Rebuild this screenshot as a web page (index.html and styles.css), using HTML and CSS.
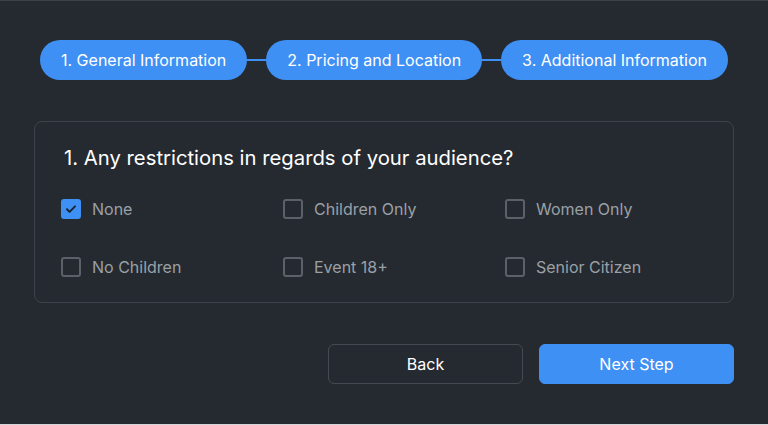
FILE: index.html
```html
<!DOCTYPE html>
<html lang="en">
<head>
<meta charset="utf-8">
<title>Additional Information</title>
<link rel="stylesheet" href="styles.css">
</head>
<body>
<div class="frame">
  <nav class="steps">
    <div class="step">1. General Information</div>
    <div class="connector"></div>
    <div class="step">2. Pricing and Location</div>
    <div class="connector"></div>
    <div class="step">3. Additional Information</div>
  </nav>

  <section class="card">
    <h2 class="card-title">1. Any restrictions in regards of your audience?</h2>
    <div class="options">
      <label class="option"><span class="box checked"><svg viewBox="0 0 20 20" width="20" height="20"><path d="M6 10.3l2.6 2.6L14 7.4" fill="none" stroke="#1b2430" stroke-width="2" stroke-linecap="round" stroke-linejoin="round"/></svg></span><span class="label">None</span></label>
      <label class="option"><span class="box"></span><span class="label">Children Only</span></label>
      <label class="option"><span class="box"></span><span class="label">Women Only</span></label>
      <label class="option"><span class="box"></span><span class="label">No Children</span></label>
      <label class="option"><span class="box"></span><span class="label">Event 18+</span></label>
      <label class="option"><span class="box"></span><span class="label">Senior Citizen</span></label>
    </div>
  </section>

  <div class="actions">
    <button class="btn btn-back">Back</button>
    <button class="btn btn-next">Next Step</button>
  </div>
</div>
</body>
</html>
```

FILE: styles.css
```css
html, body {
  margin: 0;
  padding: 0;
}
body {
  background: #d3d6d9;
  font-family: Inter, "Noto Sans", "Liberation Sans", sans-serif;
  width: 768px;
  height: 425px;
  overflow: hidden;
}
.frame {
  box-sizing: border-box;
  height: 424px;
  background: #252a30;
  border-top: 1px solid #3d4248;
  padding: 39px 34px 0 34px;
}
.steps {
  display: flex;
  align-items: center;
  padding: 0 6px;
}
.step {
  height: 40px;
  line-height: 40px;
  padding: 0 21px;
  border-radius: 20px;
  background: #3f90f4;
  color: #ffffff;
  font-size: 16px;
  white-space: nowrap;
}
.connector {
  flex: 1;
  height: 2px;
  background: #3f90f4;
}
.card {
  margin-top: 41px;
  border: 1px solid #3d434a;
  border-radius: 8px;
  padding: 24px 26px 25px 26px;
}
.card-title {
  margin: 0;
  font-size: 20.3px;
  line-height: 24px;
  font-weight: 400;
  color: #ffffff;
  padding-left: 3px;
}
.options {
  margin-top: 29px;
  display: grid;
  grid-template-columns: repeat(3, 1fr);
  column-gap: 20px;
  row-gap: 38px;
}
.option {
  display: flex;
  align-items: center;
  gap: 11px;
  height: 20px;
}
.box {
  box-sizing: border-box;
  width: 20px;
  height: 20px;
  border: 2px solid #5b6168;
  border-radius: 3px;
  display: flex;
  align-items: center;
  justify-content: center;
}
.box.checked {
  background: #3f90f4;
  border-color: #3f90f4;
}
.box svg {
  display: block;
  flex: none;
}
.label {
  font-size: 16px;
  line-height: 20px;
  color: #9aa0a6;
}
.actions {
  margin-top: 41px;
  display: flex;
  justify-content: flex-end;
  gap: 16px;
}
.btn {
  width: 195px;
  height: 40px;
  border-radius: 6px;
  font-family: inherit;
  font-size: 16px;
  color: #ffffff;
  cursor: pointer;
}
.btn-back {
  background: transparent;
  border: 1px solid #444a51;
}
.btn-next {
  background: #3f90f4;
  border: 1px solid #3f90f4;
}
```
